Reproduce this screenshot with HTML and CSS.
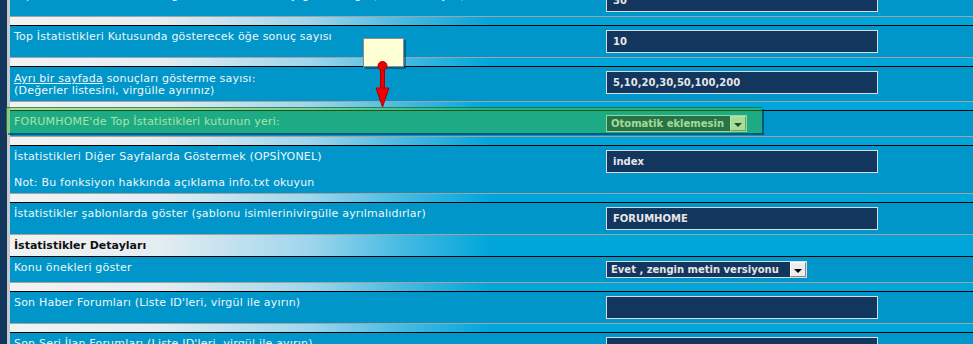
FILE: index.html
```html
<!DOCTYPE html>
<html lang="tr">
<head>
  <meta charset="UTF-8">
  <title>İstatistik Ayarları</title>
  <link rel="stylesheet" href="styles.css">
</head>
<body>
  <div class="page">
    <div class="opt">
      <div class="label">Top İstatistikleri Kutusunda gösterilecek konu başlığı uzunluğu (karakter sayısı)</div>
      <div class="field"><input class="text" type="text" value="30"></div>
    </div>
    <div class="sep"></div>

    <div class="opt">
      <div class="label">Top İstatistikleri Kutusunda gösterecek öğe sonuç sayısı</div>
      <div class="field"><input class="text" type="text" value="10"></div>
    </div>
    <div class="sep"></div>

    <div class="opt">
      <div class="label two"><a href="#">Ayrı bir sayfada</a> sonuçları gösterme sayısı:<br>(Değerler listesini, virgülle ayırınız)</div>
      <div class="field"><input class="text" type="text" value="5,10,20,30,50,100,200"></div>
    </div>
    <div class="sep"></div>

    <div class="opt">
      <div class="label">FORUMHOME'de Top İstatistikleri kutunun yeri:</div>
      <div class="field">
        <div class="select"><span class="value">Otomatik eklemesin</span><span class="btn"></span></div>
      </div>
    </div>
    <div class="sep"></div>

    <div class="opt">
      <div class="label">İstatistikleri Diğer Sayfalarda Göstermek (OPSİYONEL)<br><br>Not: Bu fonksiyon hakkında açıklama info.txt okuyun</div>
      <div class="field"><input class="text" type="text" value="index"></div>
    </div>
    <div class="sep"></div>

    <div class="opt">
      <div class="label">İstatistikler şablonlarda göster (şablonu isimlerinivirgülle ayrılmalıdırlar)</div>
      <div class="field"><input class="text" type="text" value="FORUMHOME"></div>
    </div>
    <div class="head">İstatistikler Detayları</div>

    <div class="opt">
      <div class="label">Konu önekleri göster</div>
      <div class="field">
        <div class="select wide"><span class="value">Evet , zengin metin versiyonu</span><span class="btn"></span></div>
      </div>
    </div>
    <div class="sep"></div>

    <div class="opt">
      <div class="label">Son Haber Forumları (Liste ID'leri, virgül ile ayırın)</div>
      <div class="field"><input class="text" type="text" value=""></div>
    </div>
    <div class="sep"></div>

    <div class="opt">
      <div class="label">Son Seri İlan Forumları (Liste ID'leri, virgül ile ayırın)</div>
      <div class="field"><input class="text" type="text" value=""></div>
    </div>
  </div>

  <!-- ekran görüntüsü üzerindeki işaretler -->
  <div class="mark"></div>
  <div class="note"></div>
  <svg class="pointer" viewBox="0 0 24 50" width="24" height="50">
    <rect x="10.5" y="8" width="4" height="24" fill="#ee0000" stroke="#a80000" stroke-width="1"></rect>
    <circle cx="12.5" cy="8" r="4.5" fill="#ee0000" stroke="#a80000" stroke-width="1"></circle>
    <polygon points="6,30 19,30 12.5,49" fill="#ee0000" stroke="#a80000" stroke-width="1"></polygon>
  </svg>
</body>
</html>
```

FILE: styles.css
```css
body {
  margin: 0;
  background: #12365c;
  font-family: "DejaVu Sans", Verdana, sans-serif;
  font-size: 11px;
  line-height: 13px;
  color: #eef6fa;
  overflow: hidden;
}

.page {
  margin: -15px 0 0 7px;
  border-left: 3px solid #c5c8cc;
  background: #0096c9;
}

.opt {
  display: grid;
  grid-template-columns: 592px 1fr;
  background: #0096c9;
}

.opt > div {
  padding: 4px;
}

.label {
  letter-spacing: 0.2px;
}

.label.two {
  padding-top: 6px;
  line-height: 12px;
}

.label a {
  color: #eef6fa;
}

.sep,
.head {
  border-top: 1px solid #a3a3a3;
  border-bottom: 1px solid #000;
  background: linear-gradient(to right, #f2f2f2 0, #e4edf1 150px, #9ed6ec 300px, #3fb8e2 400px, #00a6da 480px);
}

.sep {
  height: 8px;
}

.head {
  height: 21px;
  line-height: 21px;
  padding-left: 4px;
  font-weight: bold;
  color: #111;
}

input.text {
  box-sizing: border-box;
  width: 272px;
  height: 23px;
  margin: 0;
  padding: 0 6px;
  border: 1px solid #d6dde4;
  background: #12365e;
  color: #e6e6e6;
  font-family: "DejaVu Sans", Verdana, sans-serif;
  font-size: 10px;
  font-weight: bold;
  outline: none;
}

.select {
  box-sizing: border-box;
  display: flex;
  align-items: center;
  width: 141px;
  height: 17px;
  border: 1px solid #d6dde4;
  background: #12365e;
  color: #e6e6e6;
  font-size: 10px;
  font-weight: bold;
}

.select.wide {
  width: 201px;
}

.select .value {
  flex: 1;
  padding-left: 4px;
  white-space: nowrap;
  overflow: hidden;
}

.select .btn {
  position: relative;
  box-sizing: border-box;
  width: 16px;
  height: 15px;
  border: 1px solid;
  border-color: #fff #888 #888 #fff;
  background: #ececec;
}

.select .btn::after {
  content: "";
  position: absolute;
  left: 3px;
  top: 6px;
  border-left: 4px solid transparent;
  border-right: 4px solid transparent;
  border-top: 4px solid #000;
}

.mark {
  position: absolute;
  left: 6px;
  top: 107px;
  width: 756px;
  height: 26px;
  box-sizing: border-box;
  border-top: 1px solid rgba(20, 80, 30, 0.6);
  background: rgba(70, 200, 40, 0.42);
  box-shadow: 2px 2px 0 rgba(0, 40, 60, 0.55);
}

.note {
  position: absolute;
  left: 363px;
  top: 38px;
  width: 41px;
  height: 29px;
  box-sizing: border-box;
  border: 1px solid #8c8c8c;
  background: #ffffd6;
  box-shadow: 2px 2px 0 rgba(0, 40, 70, 0.45);
}

.pointer {
  position: absolute;
  left: 370px;
  top: 58px;
}
```
